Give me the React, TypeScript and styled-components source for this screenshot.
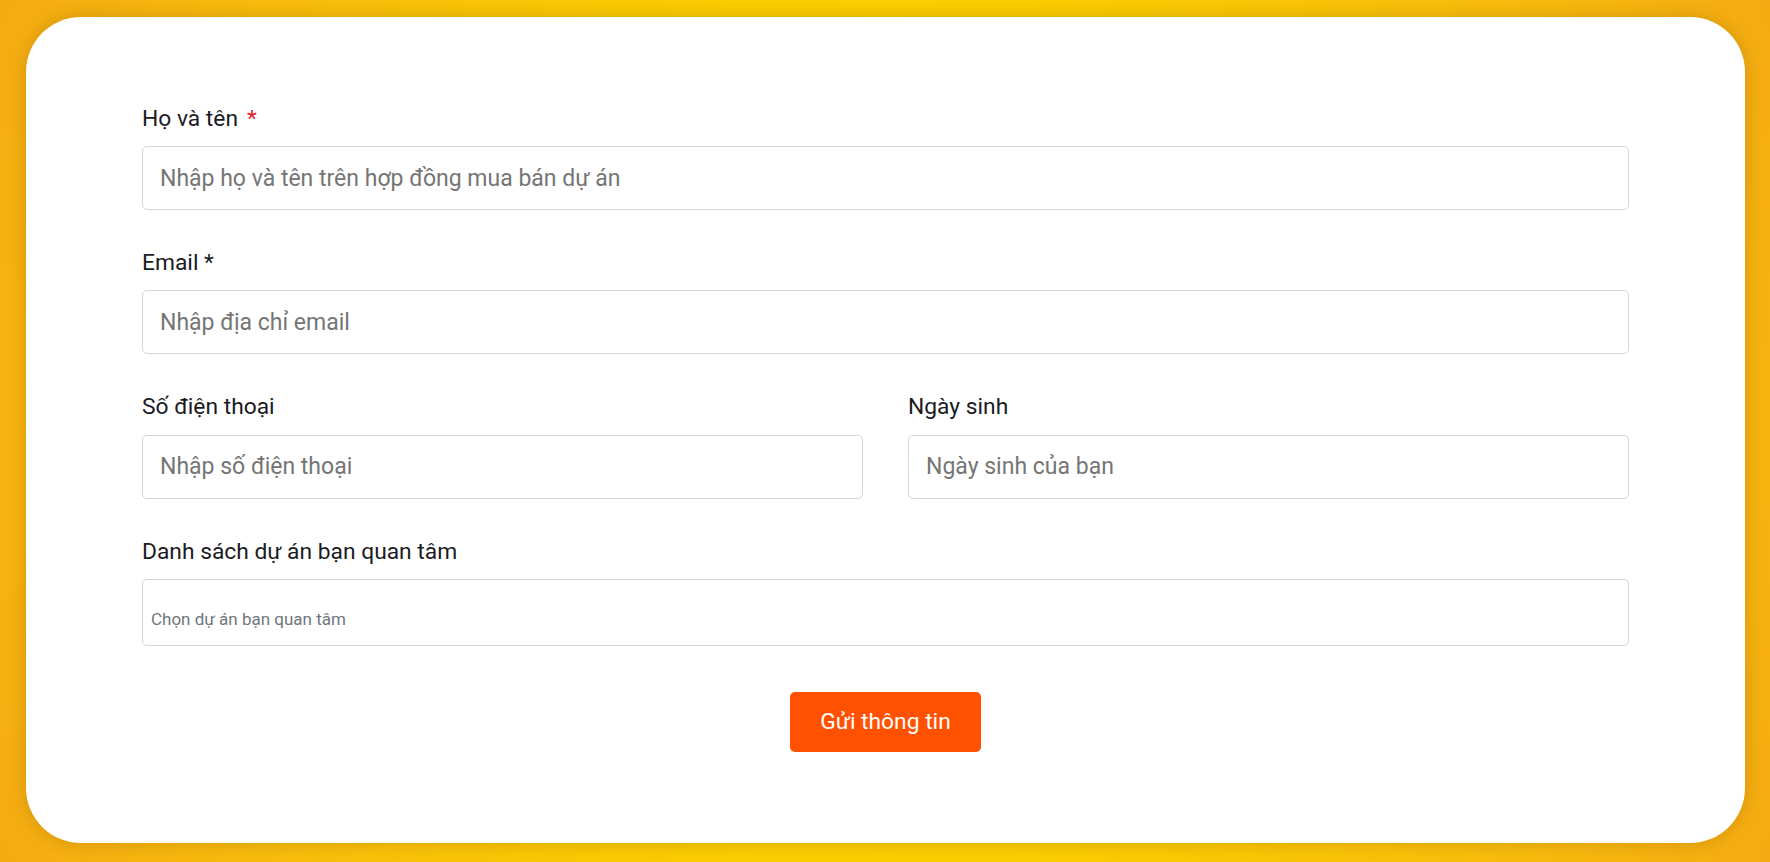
import React, {FC} from 'react';
import styled, {createGlobalStyle} from "styled-components";

const GlobalStyle = createGlobalStyle`
  * {
    box-sizing: border-box;
  }

  body {
    margin: 0;
    font-family: Roboto, "Liberation Sans", Arial, sans-serif;
  }
`

type FieldType = {
  label: string
  placeholder: string
  required?: 'red' | 'plain'
}

const Field: FC<FieldType> = ({label, placeholder, required}) => {
  return (
    <FieldWrap>
      <Label>
        {label}
        {required === 'red' && <RedStar>*</RedStar>}
        {required === 'plain' && ' *'}
      </Label>
      <Input placeholder={placeholder}/>
    </FieldWrap>
  );
};

const App: FC = () => {
  return (
    <Page>
      <GlobalStyle/>
      <Card>
        <Field label="Họ và tên" placeholder="Nhập họ và tên trên hợp đồng mua bán dự án" required="red"/>
        <Field label="Email" placeholder="Nhập địa chỉ email" required="plain"/>

        <Row>
          <Field label="Số điện thoại" placeholder="Nhập số điện thoại"/>
          <Field label="Ngày sinh" placeholder="Ngày sinh của bạn"/>
        </Row>

        <FieldWrap>
          <Label>Danh sách dự án bạn quan tâm</Label>
          <Select>Chọn dự án bạn quan tâm</Select>
        </FieldWrap>

        <Actions>
          <Submit type="button">Gửi thông tin</Submit>
        </Actions>
      </Card>
    </Page>
  );
};

export default App;

const Page = styled.div`
  height: 862px;
  padding: 17px 25px 19px 26px;
  background: radial-gradient(circle at 50% 50%, #ffd800 0%, #fdd000 40%, #f8ba0e 80%, #f4ab12 100%);
`

const Card = styled.div`
  height: 100%;
  background: #ffffff;
  border-radius: 55px;
  box-shadow: 0 0 18px rgba(120, 70, 0, 0.28);
  padding: 85px 116px 0 116px;
`

const FieldWrap = styled.div`
  margin-bottom: 36px;
`

const Label = styled.div`
  font-size: 22.8px;
  line-height: 34.2px;
  color: #1b1b1f;
  margin-bottom: 10px;
`

const RedStar = styled.span`
  color: #e0202b;
  margin-left: 9px;
`

const Input = styled.input`
  display: block;
  width: 100%;
  height: 64px;
  padding: 0 17px;
  border: 1px solid #d3d6da;
  border-radius: 5px;
  font-family: inherit;
  font-size: 23px;
  color: #212529;
  outline: none;

  ::placeholder {
    color: #70767d;
  }
`

const Row = styled.div`
  display: grid;
  grid-template-columns: 1fr 1fr;
  column-gap: 45px;
`

const Select = styled.div`
  height: 67px;
  padding: 29px 8px 0;
  border: 1px solid #d3d6da;
  border-radius: 5px;
  font-size: 17px;
  color: #70767d;
`

const Actions = styled.div`
  display: flex;
  justify-content: center;
  margin-top: 46px;
`

const Submit = styled.button`
  width: 191px;
  height: 60px;
  border: none;
  border-radius: 5px;
  background: #ff5100;
  color: #ffffff;
  font-family: inherit;
  font-size: 22.8px;
  cursor: pointer;
`
